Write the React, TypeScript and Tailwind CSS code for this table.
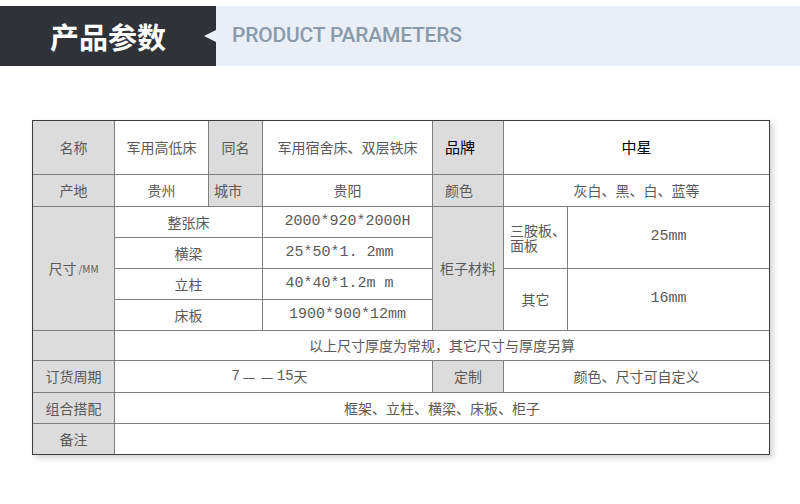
import React from "react"

const cjk = "font-['Noto_Sans_CJK_SC',sans-serif]"
const mono = "font-['Liberation_Mono','Noto_Sans_CJK_SC',monospace]"

type CellProps = {
  children?: React.ReactNode
  className?: string
  gray?: boolean
  num?: boolean
}

function Cell({ children, className = "", gray, num }: CellProps) {
  return (
    <div
      className={`flex items-center justify-center text-[14px] text-[#5a5a5a] ${
        gray ? "bg-[#dcdcdc]" : "bg-white"
      } ${num ? mono + " text-[15px]" : cjk} ${className}`}
    >
      {children}
    </div>
  )
}

export default function App() {
  return (
    <div className="w-[800px] h-[504px] bg-white overflow-hidden">
      {/* Header */}
      <div className="mt-[6px] flex h-[60px]">
        <div className="relative flex w-[216px] items-center bg-[#2f3236] pl-[50px]">
          <span className={`text-[29px] font-bold leading-none text-white ${cjk}`}>
            产品参数
          </span>
          <span className="absolute right-0 top-[24px] h-0 w-0 border-y-[6px] border-r-[12px] border-y-transparent border-r-[#e9eff6]" />
        </div>
        <div className="flex flex-1 items-center bg-[#e9eff6] pl-[16px]">
          <span className="font-['Roboto',sans-serif] text-[21px] font-medium tracking-[-0.2px] text-[#899bab]">
            PRODUCT PARAMETERS
          </span>
        </div>
      </div>

      {/* Table */}
      <div className="ml-[32px] mt-[54px] w-[738px] border border-[#3c3c3c] bg-[#808080] shadow-[3px_3px_6px_rgba(0,0,0,0.18)]">
        <div className="grid grid-cols-[81px_93px_53px_169px_70px_63px_201px] grid-rows-[53px_31px_30px_30px_30px_30px_29px_31px_30px_30px] gap-px">
          {/* row 1 */}
          <Cell gray>名称</Cell>
          <Cell>军用高低床</Cell>
          <Cell gray>同名</Cell>
          <Cell>军用宿舍床、双层铁床</Cell>
          <Cell gray className="!justify-start pl-3 !text-[15px] !text-black">
            品牌
          </Cell>
          <Cell className="col-span-2 !text-[15px] !text-black">中星</Cell>

          {/* row 2 */}
          <Cell gray>产地</Cell>
          <Cell>贵州</Cell>
          <Cell gray className="!justify-start pl-[5px]">
            城市
          </Cell>
          <Cell>贵阳</Cell>
          <Cell gray className="!justify-start pl-3">
            颜色
          </Cell>
          <Cell className="col-span-2">灰白、黑、白、蓝等</Cell>

          {/* size rows */}
          <Cell gray className="row-span-4">
            尺寸<span className="ml-[2px] text-[10px]">/MM</span>
          </Cell>
          <Cell className="col-span-2">整张床</Cell>
          <Cell num>2000*920*2000H</Cell>
          <Cell gray className="row-span-4">
            柜子材料
          </Cell>
          <Cell className="row-span-2 !justify-start pl-[6px] leading-[15px]">
            <span>三胺板、面板</span>
          </Cell>
          <Cell num className="row-span-2">
            25mm
          </Cell>

          <Cell className="col-span-2">横梁</Cell>
          <Cell num className="pr-[16px]">
            25*50*1. 2mm
          </Cell>

          <Cell className="col-span-2">立柱</Cell>
          <Cell num className="pr-[16px]">
            40*40*1.2m m
          </Cell>
          <Cell className="row-span-2">其它</Cell>
          <Cell num className="row-span-2">
            16mm
          </Cell>

          <Cell className="col-span-2">床板</Cell>
          <Cell num>1900*900*12mm</Cell>

          {/* row 7 */}
          <Cell gray />
          <Cell className="col-span-6">以上尺寸厚度为常规，其它尺寸与厚度另算</Cell>

          {/* row 8 */}
          <Cell gray>订货周期</Cell>
          <Cell className="col-span-3 pr-[8px]">
            <span className={mono}>7</span>
            <span className="ml-[3px] w-[14px] overflow-hidden">—</span>
            <span className="ml-[4px] w-[14px] overflow-hidden">—</span>
            <span className={`ml-[2px] ${mono}`}>15</span>
            <span>天</span>
          </Cell>
          <Cell gray>定制</Cell>
          <Cell className="col-span-2">颜色、尺寸可自定义</Cell>

          {/* row 9 */}
          <Cell gray>组合搭配</Cell>
          <Cell className="col-span-6">框架、立柱、横梁、床板、柜子</Cell>

          {/* row 10 */}
          <Cell gray>备注</Cell>
          <Cell className="col-span-6" />
        </div>
      </div>
    </div>
  )
}
